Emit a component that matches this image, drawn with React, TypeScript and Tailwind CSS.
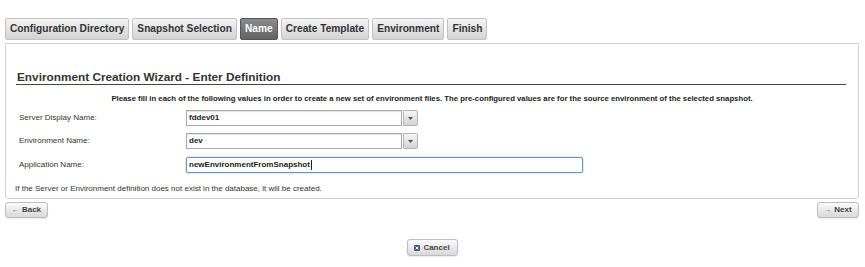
import React from 'react';

const tabs = [
  { label: 'Configuration Directory', active: false },
  { label: 'Snapshot Selection', active: false },
  { label: 'Name', active: true },
  { label: 'Create Template', active: false },
  { label: 'Environment', active: false },
  { label: 'Finish', active: false },
];

function ComboInput({ value }: { value: string }) {
  return (
    <div className="flex h-[16px] items-stretch">
      <div className="w-[216px] border border-[#a9a9a9] bg-white pl-[2px] flex items-center text-[8px] font-bold text-[#222] shadow-[inset_0_1px_1px_rgba(0,0,0,0.12)]">
        {value}
      </div>
      <div className="w-[15px] ml-px rounded-r-[2px] border border-[#b3b3b3] bg-gradient-to-b from-[#f6f6f6] to-[#d4d4d4] flex items-center justify-center">
        <svg width="5" height="3" viewBox="0 0 5 3">
          <path d="M0 0h5L2.5 3z" fill="#555" />
        </svg>
      </div>
    </div>
  );
}

function Button({ children, className = '' }: { children: React.ReactNode; className?: string }) {
  return (
    <button
      className={`flex items-center justify-center gap-[3px] rounded-[3px] border border-[#bdbdbd] bg-gradient-to-b from-[#fbfbfb] to-[#d9d9d9] text-[8px] font-bold text-[#444] shadow-[0_1px_1px_rgba(0,0,0,0.08)] ${className}`}
    >
      {children}
    </button>
  );
}

export default function App() {
  return (
    <div className="w-[865px] h-[267px] bg-white pl-[5px] pr-[6px] pt-[18px] font-['Liberation_Sans',Arial,sans-serif] overflow-hidden">
      <div className="flex h-[22px] gap-[3px]">
        {tabs.map(t => (
          <div
            key={t.label}
            className={`flex items-center px-[4px] rounded-[2px] border text-[10.2px] font-bold whitespace-nowrap
              ${t.active
                ? 'border-[#555] bg-gradient-to-b from-[#8c8c8c] to-[#626262] text-white'
                : 'border-[#c2c2c2] bg-gradient-to-b from-[#f4f4f4] to-[#d3d3d3] text-[#333]'}`}
          >
            {t.label}
          </div>
        ))}
      </div>

      <div className="mt-[3px] border border-[#cfcfcf] rounded-b-[3px] h-[156px] flex flex-col">
        <div className="mt-[26px] ml-[10px] mr-[12px] border-b border-[#444]">
          <div className="text-[11.8px] leading-[14px] font-bold text-[#333] pl-px">
            Environment Creation Wizard - Enter Definition
          </div>
        </div>

        <div className="mt-[9px] text-center text-[7.75px] leading-[10px] font-bold text-[#222]">
          Please fill in each of the following values in order to create a new set of environment files. The pre-configured values are for the source environment of the selected snapshot.
        </div>

        <div className="mt-[6px] flex items-center pl-[13px] h-[16px]">
          <div className="w-[167px] text-[8px] text-[#333]">Server Display Name:</div>
          <ComboInput value="fddev01" />
        </div>
        <div className="mt-[7px] flex items-center pl-[13px] h-[16px]">
          <div className="w-[167px] text-[8px] text-[#333]">Environment Name:</div>
          <ComboInput value="dev" />
        </div>
        <div className="mt-[8px] flex items-center pl-[13px] h-[16px]">
          <div className="w-[167px] text-[8px] text-[#333]">Application Name:</div>
          <div className="w-[397px] h-[16px] rounded-[2px] border border-[#6d93bf] bg-white pl-[2px] flex items-center text-[8px] font-bold text-[#222] shadow-[0_0_2px_rgba(80,130,190,0.6)]">
            newEnvironmentFromSnapshot
            <span className="w-px h-[10px] bg-[#222] ml-px" />
          </div>
        </div>

        <div className="mt-[11px] pl-[9px] text-[8px] leading-[10px] text-[#333]">
          If the Server or Environment definition does not exist in the database, it will be created.
        </div>
      </div>

      <div className="mt-[3px] flex justify-between">
        <Button className="w-[43px] h-[16px]">
          <span className="text-[7px] text-[#4a5a6a]">←</span>
          Back
        </Button>
        <Button className="w-[42px] h-[16px]">
          <span className="text-[7px] text-[#4a5a6a]">→</span>
          Next
        </Button>
      </div>

      <div className="mt-[21px] flex justify-center">
        <Button className="w-[51px] h-[17px]">
          <svg width="6" height="6" viewBox="0 0 6 6">
            <rect width="6" height="6" rx="1" fill="#3e5d7c" />
            <path d="M1.6 1.6l2.8 2.8M4.4 1.6L1.6 4.4" stroke="#fff" strokeWidth="1" />
          </svg>
          Cancel
        </Button>
      </div>
    </div>
  );
}
